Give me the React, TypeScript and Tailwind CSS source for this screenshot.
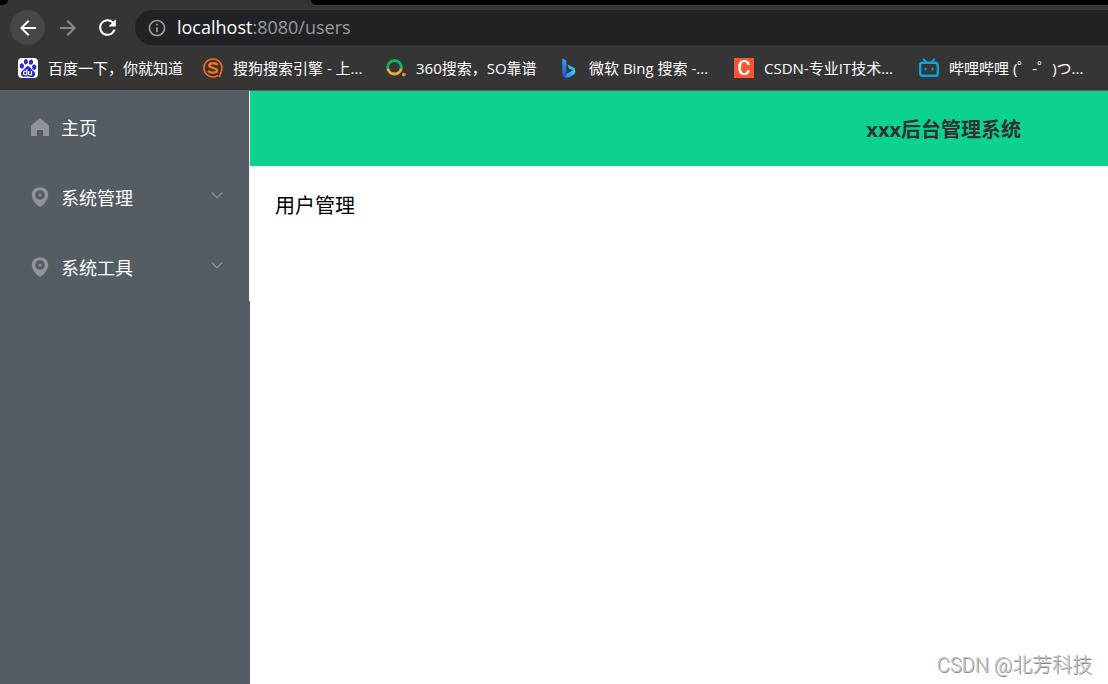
import type { ReactNode } from "react";
import { MdArrowBack, MdArrowForward, MdInfoOutline, MdRefresh } from "react-icons/md";
import { SiBaidu } from "react-icons/si";

const bookmarks = [
  { id: "baidu", title: "百度一下，你就知道", icon: <BaiduIcon />, width: "w-[165px]" },
  { id: "sogou", title: "搜狗搜索引擎 - 上...", icon: <SogouIcon />, width: "w-[163px]" },
  { id: "so360", title: "360搜索，SO靠谱", icon: <So360Icon />, width: "w-[153px]" },
  { id: "bing", title: "微软 Bing 搜索 -...", icon: <BingIcon />, width: "w-[155px]" },
  { id: "csdn", title: "CSDN-专业IT技术...", icon: <CsdnIcon />, width: "w-[165px]" },
  { id: "bilibili", title: "哔哩哔哩 (゜-゜)つ...", icon: <BilibiliIcon />, width: "w-[168px]" },
];

const menuItems = [
  { id: "home", label: "主页", icon: <HomeIcon />, hasChildren: false },
  { id: "system", label: "系统管理", icon: <LocationIcon />, hasChildren: true },
  { id: "tools", label: "系统工具", icon: <LocationIcon />, hasChildren: true },
];

export default function App() {
  return (
    <div className="flex min-h-screen flex-col bg-white font-['Open_Sans','Noto_Sans_CJK_SC',sans-serif]">
      <BrowserBar />
      <div className="flex flex-1">
        <Sidebar />
        <div className="flex min-w-0 flex-1 flex-col">
          <header className="flex h-[75px] items-center justify-end bg-[#0bd28f] pt-0.5 pr-[87px]">
            <h1 className="text-xl font-bold text-[#333333]">xxx后台管理系统</h1>
          </header>
          <main className="flex-1 px-[25px] py-[26px] text-xl text-black">用户管理</main>
          <footer className="flex justify-end px-4 pb-[5px] font-['Roboto','Noto_Sans_CJK_SC',sans-serif] text-xl font-light text-[#c4c4c4] [text-shadow:1px_1px_0_#8c8c8c]">
            CSDN @北芳科技
          </footer>
        </div>
      </div>
    </div>
  );
}

function BrowserBar() {
  return (
    <div className="border-b border-[#5f5f5f] bg-[#353535]">
      {/* bottom edge of the tab strip */}
      <div className="flex h-[5px] justify-between">
        <div className="w-2 rounded-br-lg bg-black" />
        <div className="ml-[303px] flex-1 rounded-bl-lg bg-black" />
      </div>
      <div className="flex items-center pt-[5px] pl-[10px]">
        <NavButton label="Back" className="bg-[#464646] text-white">
          <MdArrowBack size={24} />
        </NavButton>
        <NavButton label="Forward" className="ml-[5px] text-[#8a8a8a]">
          <MdArrowForward size={24} />
        </NavButton>
        <NavButton label="Reload" className="ml-[5px] text-white">
          <MdRefresh size={25} />
        </NavButton>
        <div className="ml-[10px] flex h-[35px] flex-1 items-center rounded-l-full bg-[#212226] pl-3">
          <MdInfoOutline size={20} className="shrink-0 text-[#9a9da1]" />
          <a href="#users" className="ml-[10px] pb-0.5 text-lg leading-6 text-[#999b9e]">
            <span className="text-white">localhost</span>:8080/users
          </a>
        </div>
      </div>
      <nav aria-label="Bookmarks" className="flex h-[45px] items-center gap-5 overflow-hidden pl-[18px]">
        {bookmarks.map((bookmark) => (
          <a
            key={bookmark.id}
            href={`#${bookmark.id}`}
            className={`flex shrink-0 items-center gap-[10px] text-[15px] leading-5 whitespace-nowrap text-white ${bookmark.width}`}
          >
            {bookmark.icon}
            <span>{bookmark.title}</span>
          </a>
        ))}
      </nav>
    </div>
  );
}

function NavButton({ label, className, children }: { label: string; className: string; children: ReactNode }) {
  return (
    <button
      type="button"
      aria-label={label}
      className={`flex h-[35px] w-[35px] shrink-0 items-center justify-center rounded-full ${className}`}
    >
      {children}
    </button>
  );
}

function Sidebar() {
  return (
    <aside className="w-[250px] shrink-0 bg-[#545c64]">
      <ul className="border-r border-[#f2f3f5]">
        {menuItems.map((item) => (
          <li key={item.id}>
            <button type="button" className="flex h-[70px] w-full items-center gap-[9px] pr-[26px] pl-7 text-left">
              {item.icon}
              <span className="flex-1 pt-1 text-lg leading-6 text-white">{item.label}</span>
              {item.hasChildren && <ChevronIcon />}
            </button>
          </li>
        ))}
      </ul>
    </aside>
  );
}

function HomeIcon() {
  return (
    <svg viewBox="0 0 1024 1024" className="mt-0.5 h-6 w-6 shrink-0 fill-[#909399]" aria-hidden="true">
      <path d="M512 128 128 447.936V896h255.936V640H640v256h255.936V447.936z" />
    </svg>
  );
}

function LocationIcon() {
  return (
    <svg viewBox="0 0 1024 1024" className="mt-0.5 h-6 w-6 shrink-0 fill-[#909399]" aria-hidden="true">
      <path d="M512 928c23.936 0 117.504-68.352 192.064-153.152C803.456 661.888 864 535.808 864 416c0-189.632-155.84-320-352-320S160 226.368 160 416c0 120.32 60.544 246.4 159.936 359.232C394.432 859.84 488 928 512 928zm0-435.2a64 64 0 1 0 0-128 64 64 0 0 0 0 128zm0 140.8a204.8 204.8 0 1 1 0-409.6 204.8 204.8 0 0 1 0 409.6z" />
    </svg>
  );
}

function ChevronIcon() {
  return (
    <svg viewBox="0 0 12 12" className="mb-0.5 h-3 w-3 shrink-0" fill="none" stroke="#909399" strokeWidth="1.2" aria-hidden="true">
      <path d="M.7 3.500 6 8.700l5.300-5.200" />
    </svg>
  );
}

function BaiduIcon() {
  return (
    <span className="flex h-5 w-5 items-center justify-center rounded-sm bg-white">
      <SiBaidu size={18} color="#2529d8" />
    </span>
  );
}

function SogouIcon() {
  return (
    <svg viewBox="0 0 20 20" className="h-5 w-5" fill="none" stroke="#fb6c1e" strokeLinecap="round" aria-hidden="true">
      <path d="M14.7 17.6A9 9 0 1 1 18.4 13" strokeWidth="1.6" />
      <path d="M14 6.2C12 5 6.3 4.6 6.2 7.4c0 3 7.8 1.8 7.8 4.9 0 3-6 2.7-8.3 1.2" strokeWidth="2.4" />
      <path d="M18 14.4l-.6 1.6M16.8 17.8l-.2.5" strokeWidth="1.8" />
    </svg>
  );
}

function So360Icon() {
  return (
    <svg viewBox="0 0 20 20" className="h-5 w-5" fill="none" strokeWidth="3" aria-hidden="true">
      <path d="M1.8 10.4A6.8 6.8 0 1 1 15.2 10.4" stroke="#12b259" />
      <path d="M1.8 10.4A6.8 6.8 0 0 0 15.2 10.4" stroke="#f9a13a" />
      <circle cx="17.8" cy="16.6" r="1.9" fill="#f58b2e" />
    </svg>
  );
}

function BingIcon() {
  return (
    <svg viewBox="0 0 20 20" className="h-5 w-5" aria-hidden="true">
      <defs>
        <linearGradient id="bing-stem" x1="0" y1="0" x2="0" y2="1">
          <stop offset="0" stopColor="#35aaf8" />
          <stop offset="1" stopColor="#1e50dc" />
        </linearGradient>
        <linearGradient id="bing-bowl" x1="0" y1="1" x2="1" y2="0">
          <stop offset="0" stopColor="#1c7fe8" />
          <stop offset="1" stopColor="#43d9f5" />
        </linearGradient>
      </defs>
      <path d="M4.5 18.2C6.5 20.2 9 20 11 18.9l3.8-2.3c1.8-1.2 2-3.6.7-5L7 16.2Z" fill="url(#bing-bowl)" />
      <path d="M3.3.5 6.4 2c.7.3 1 .8 1 1.5v12.600l-.6 2.500C4.900 18.600 3.300 17.500 3.300 15.700Z" fill="url(#bing-stem)" />
      <path d="m8.400 6.500 5.600 2.700c1.800.9 2.600 2.400 2.100 4.500-.4-.8-1.100-1.300-1.900-1.600l-3.400-1.200c-.5-.2-.9-.5-1.100-1Z" fill="#35bdf3" />
    </svg>
  );
}

function CsdnIcon() {
  return (
    <span
      className="flex h-5 w-5 items-center justify-center bg-[#fc5531] font-['Roboto',sans-serif] text-xl leading-5 font-medium text-white"
      aria-hidden="true"
    >
      C
    </span>
  );
}

function BilibiliIcon() {
  return (
    <svg viewBox="0 0 20 20" className="h-5 w-5" fill="none" stroke="#08a5dc" strokeLinecap="round" aria-hidden="true">
      <rect x="1.2" y="4.7" width="17.6" height="13" rx="2.5" strokeWidth="2.4" />
      <path d="M4.8 1.4 7 3.8M15.2 1.4 13 3.800" strokeWidth="2" />
      <path d="M6.500 10.500v1M13.500 10.500v1" strokeWidth="2" />
    </svg>
  );
}
